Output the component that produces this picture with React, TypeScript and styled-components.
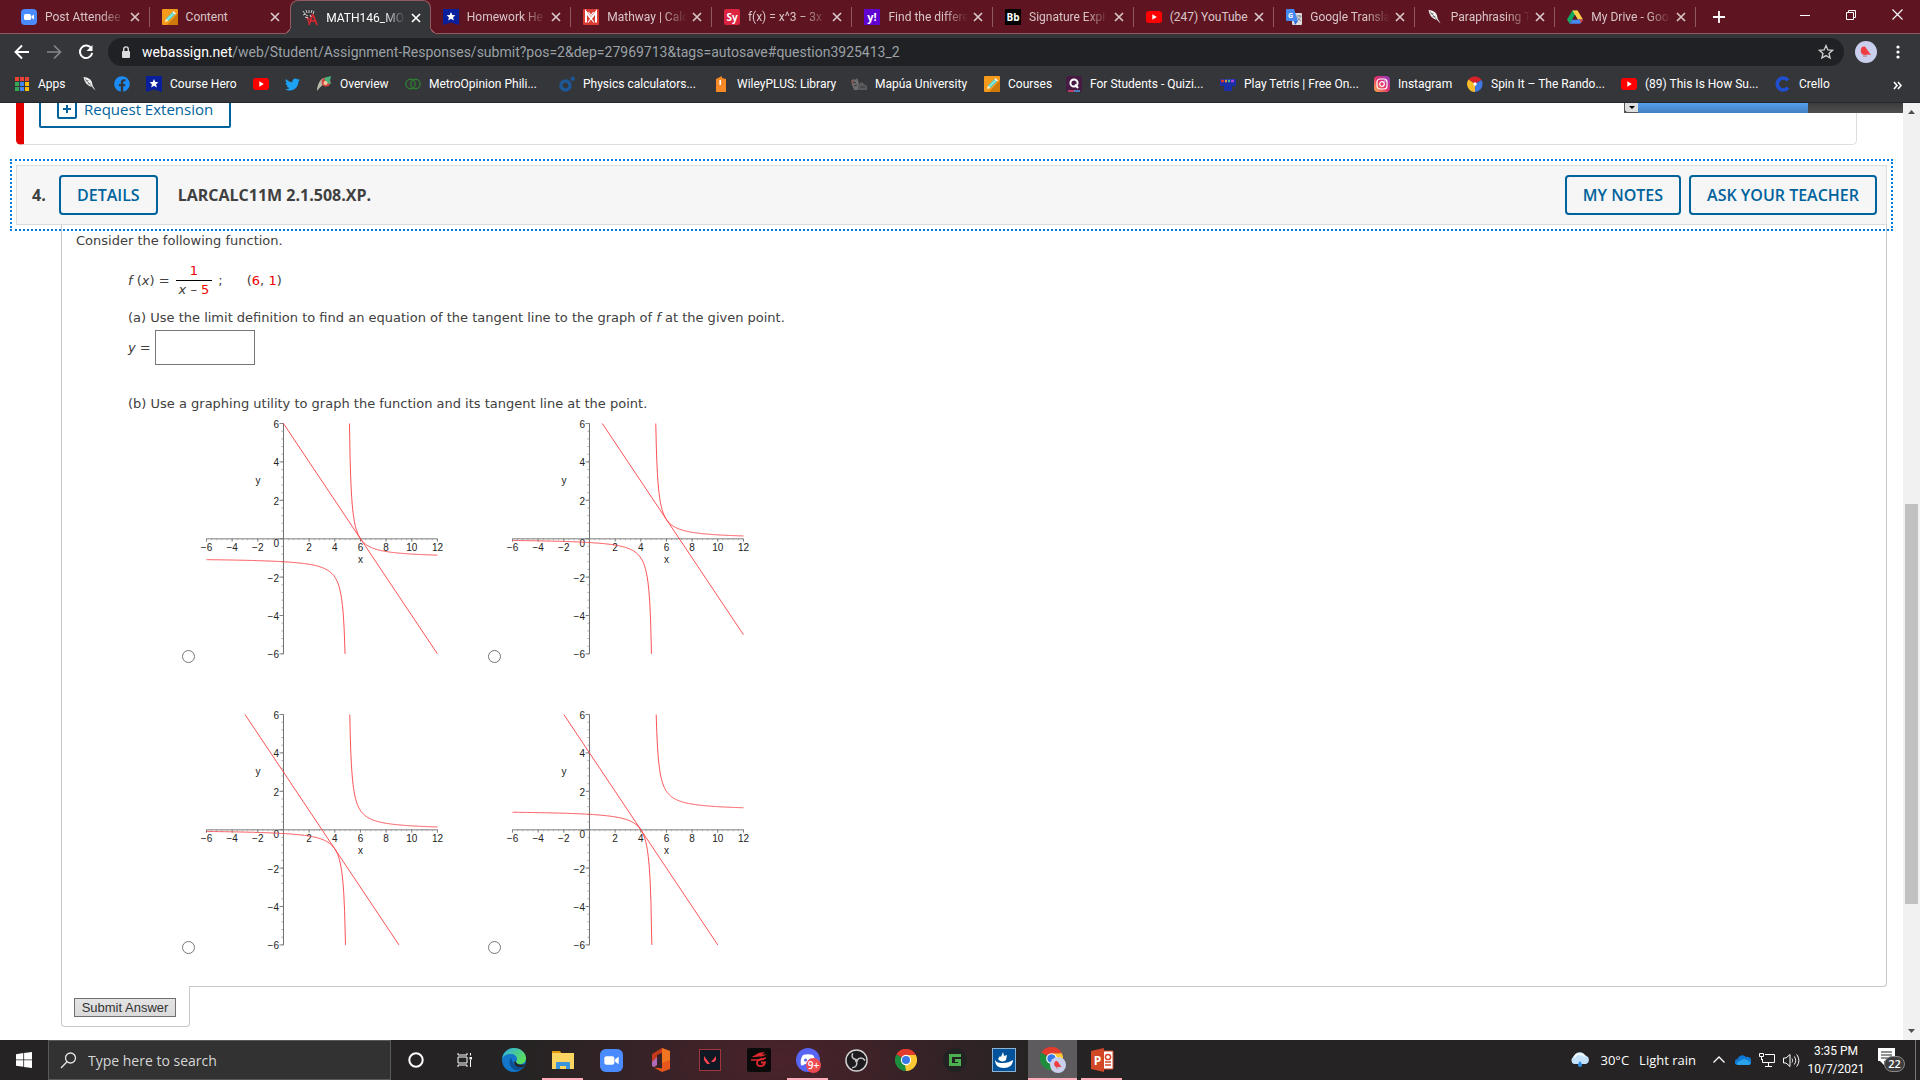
import React from "react";
import styled, { createGlobalStyle, css } from "styled-components";
import { FaFacebook, FaTwitter } from "react-icons/fa";

const ui = `"Open Sans", "Noto Sans", sans-serif`;
const chromeUi = `Roboto, "Open Sans", sans-serif`;
const verdana = `"DejaVu Sans", "Noto Sans", sans-serif`;
const arial = `"Liberation Sans", sans-serif`;

const brand = "#00639c";
const line = "#c8c8c8";

const Global = createGlobalStyle`
  *, *::before, *::after { box-sizing: border-box; }
  body { margin: 0; background: #fff; font-family: ${ui}; }
  button, input { font: inherit; margin: 0; }
`;

const Screen = styled.div`
  display: flex;
  flex-direction: column;
  height: 100vh;
  overflow: hidden;
`;

/* ---------- browser chrome ---------- */

const TabStrip = styled.header`
  display: flex;
  height: 34px;
  padding-left: 9px;
  background: #5e1521;
  box-shadow: inset 0 -1px #945a62;
  font-family: ${chromeUi};
`;

const TabList = styled.div`
  display: flex;
  flex: 1;
  min-width: 0;
`;

const Tab = styled.div<{ $active?: boolean; $divider?: boolean }>`
  position: relative;
  display: flex;
  flex: 1 1 0;
  align-items: center;
  min-width: 0;
  padding: 0 7px 0 12px;
  color: #d9c6c9;
  font-size: 12px;

  ${(p) =>
    p.$divider &&
    css`
      &::after {
        content: "";
        position: absolute;
        right: 0;
        top: 7px;
        height: 20px;
        border-right: 1px solid #8f5a62;
      }
    `}

  ${(p) =>
    p.$active &&
    css`
      color: #fff;
      background: #35363a;
      border: 1px solid #945a62;
      border-bottom: 0;
      border-radius: 8px 8px 0 0;
      padding: 0 6px 0 11px;

      &::before,
      &::after {
        content: "";
        position: absolute;
        bottom: 0;
        width: 8px;
        height: 8px;
      }
      &::before {
        left: -8px;
        background: radial-gradient(circle at 0 0, transparent 7px, #945a62 7px, #945a62 8px, #35363a 8px);
      }
      &::after {
        right: -8px;
        background: radial-gradient(circle at 100% 0, transparent 7px, #945a62 7px, #945a62 8px, #35363a 8px);
      }
    `}
`;

const TabLabel = styled.span<{ $fade?: boolean }>`
  flex: 1;
  min-width: 0;
  margin-left: 8px;
  white-space: nowrap;
  mask-image: ${(p) =>
    p.$fade ? "linear-gradient(to right, #000 calc(100% - 26px), transparent calc(100% - 2px))" : "none"};
`;

const IconButton = styled.button<{ $w?: number }>`
  display: flex;
  flex: none;
  align-items: center;
  justify-content: center;
  width: ${(p) => p.$w ?? 16}px;
  height: ${(p) => (p.$w ? "100%" : "16px")};
  padding: 0;
  border: 0;
  color: inherit;
  background: none;
`;

const StripActions = styled.div`
  display: flex;
  width: 224px;
  color: #fff;
`;

const WindowControls = styled.div`
  display: flex;
  height: 29px;
  margin-left: auto;
`;

const Toolbar = styled.nav`
  display: flex;
  align-items: center;
  height: 36px;
  padding: 0 6px;
  color: #fff;
  background: #35363a;
  font-family: ${chromeUi};
`;

const Omnibox = styled.div`
  display: flex;
  flex: 1;
  align-items: center;
  height: 28px;
  margin: 0 6px;
  padding: 0 10px 0 12px;
  border-radius: 14px;
  color: #9aa0a6;
  background: #202124;
  font-size: 14px;
`;

const Url = styled.span`
  flex: 1;
  margin-left: 10px;
  white-space: nowrap;

  b {
    color: #fff;
    font-weight: 400;
  }
`;

const Bookmarks = styled.nav`
  display: flex;
  align-items: center;
  height: 33px;
  padding: 0 18px 4px 14px;
  gap: 16px;
  background: #35363a;
  border-bottom: 1px solid #26272a;
  font-family: ${chromeUi};
`;

const Bookmark = styled.a<{ $w?: number }>`
  display: flex;
  flex: none;
  align-items: center;
  gap: 8px;
  width: ${(p) => (p.$w ? `${p.$w}px` : "auto")};
  color: #fff;
  font-size: 12px;
  line-height: 16px;
  text-decoration: none;
  white-space: nowrap;

  svg {
    flex: none;
  }
`;

const Overflow = styled.span`
  margin-left: auto;
`;

/* ---------- page ---------- */

const Viewport = styled.div`
  position: relative;
  display: flex;
  flex: 1;
  min-height: 0;
  overflow: hidden;
`;

const Page = styled.main`
  flex: 1;
  min-width: 0;
`;

const Scrollbar = styled.div`
  display: flex;
  flex-direction: column;
  align-items: center;
  width: 17px;
  background: #f1f1f1;
`;

const ScrollTrack = styled.div`
  display: grid;
  grid-template-rows: 384fr 400fr 119fr;
  flex: 1;
  width: 13px;

  &::before {
    content: "";
    grid-row: 2;
    background: #c1c1c1;
  }
`;

const Timer = styled.div`
  position: absolute;
  top: 0;
  right: 17px;
  display: flex;
  width: 279px;
  height: 10px;
  background: linear-gradient(#3c3c3c, #505050);
`;

const TimerToggle = styled.button`
  display: flex;
  align-items: center;
  justify-content: center;
  width: 14px;
  padding: 0;
  border: solid #555;
  border-width: 0 0 1px 1px;
  border-radius: 0 0 0 4px;
  background: #dedede;
`;

const TimerFill = styled.div`
  width: 170px;
  background: linear-gradient(#559fee, #4280bf);
`;

const PreviousCard = styled.section`
  margin: 0 46px 0 16px;
  padding: 0 0 16px 15px;
  border: 1px solid #dedede;
  border-top: 0;
  border-left: 8px solid #e50000;
  border-radius: 0 0 5px 5px;
`;

const OutlineButton = styled.button`
  display: inline-flex;
  align-items: center;
  justify-content: center;
  height: 40px;
  padding: 0 16px;
  border: 2px solid ${brand};
  border-radius: 4px;
  color: ${brand};
  background: #fff;
  font-size: 16px;
  font-weight: 600;
  white-space: nowrap;
`;

const HeaderButton = styled(OutlineButton)`
  background: none;
`;

const ExtensionButton = styled(OutlineButton)`
  display: flex;
  gap: 7px;
  height: 38px;
  margin-top: -13px;
  border-radius: 2px;
  font-size: 15px;
  font-weight: 400;
  line-height: 16px;
`;

const QuestionHeader = styled.header`
  display: flex;
  align-items: center;
  gap: 8px;
  margin: 20px 16px 0;
  padding: 9px 9px 9px 15px;
  border: 1px solid #dcdcdc;
  outline: 2px dotted #007be0;
  outline-offset: 4px;
  background: #f6f6f6;
  color: #404040;
  font-size: 16px;
  font-weight: 700;
`;

const QuestionNumber = styled.span`
  width: 19px;
`;

const QuestionTitle = styled.h2`
  flex: 1;
  margin: 0 0 0 12px;
  font-size: 16px;
  font-weight: 700;
`;

const QuestionBody = styled.section`
  margin: 0 16px 0 61px;
  padding: 8px 14px 32px;
  border: 1px solid ${line};
  border-top: 0;
  border-radius: 0 0 4px 0;
  color: #404040;
  font-family: ${verdana};
  font-size: 13px;
  line-height: 16px;
`;

const Text = styled.p`
  margin: 0;
`;

const Parts = styled.div`
  padding-left: 52px;
`;

const Formula = styled.div`
  display: flex;
  align-items: center;
  gap: 6px;
  margin: 14px 0 12px;
  white-space: pre;
`;

const Fraction = styled.span`
  display: flex;
  flex-direction: column;
  align-items: center;

  > span:first-child {
    align-self: stretch;
    padding-bottom: 1px;
    border-bottom: 1px solid #000;
    text-align: center;
  }
  > span:last-child {
    padding: 1px 3px 0;
  }
`;

const Red = styled.span`
  color: #f00000;
`;

const Point = styled.span`
  margin-left: 18px;
`;

const Answer = styled.label`
  display: flex;
  align-items: center;
  gap: 4px;
  margin: 4px 0 31px;
`;

const AnswerInput = styled.input`
  width: 100px;
  height: 35px;
  border: 1px solid #767676;
  background: #fff;
`;

const Choices = styled.div`
  display: grid;
  grid-template-columns: repeat(2, 266px);
  gap: 41px 40px;
  padding: 1px 0 0 54px;
`;

const Choice = styled.label`
  display: flex;
  align-items: flex-end;
  gap: 2px;
`;

const Radio = styled.input`
  appearance: none;
  width: 13px;
  height: 13px;
  border: 1px solid #767676;
  border-radius: 50%;
  background: #fff;
`;

const SubmitTab = styled.div`
  width: 129px;
  margin: -1px 0 0 61px;
  padding: 12px;
  height: 41px;
  border: 1px solid ${line};
  border-top: 0;
  border-radius: 0 0 4px 4px;
  background: #fff;
`;

const SubmitButton = styled.button`
  display: block;
  height: 19px;
  width: 102px;
  padding: 0;
  border: 1px solid #707070;
  color: #333;
  background: linear-gradient(#e4e4e4, #dadada);
  font-family: ${arial};
  font-size: 13px;
  line-height: 16px;
`;

/* ---------- taskbar ---------- */

const Taskbar = styled.footer`
  display: flex;
  height: 40px;
  color: #fff;
  background:
    radial-gradient(ellipse 260px 120px at 780px 20px, #4b222b 0, rgba(75, 34, 43, 0) 100%),
    #252323;
`;

const SearchBox = styled.label`
  display: flex;
  align-items: center;
  gap: 11px;
  width: 343px;
  padding-left: 11px;
  border: 1px solid #5a5a5a;
  background: #323232;
`;

const SearchInput = styled.input`
  flex: 1;
  min-width: 0;
  padding: 0;
  border: 0;
  outline: 0;
  color: #e0e0e0;
  background: none;
  font-size: 14px;

  &::placeholder {
    color: #d6d6d6;
    opacity: 1;
  }
`;

const AppButton = styled.button<{ $open?: boolean; $active?: boolean }>`
  position: relative;
  display: flex;
  align-items: center;
  justify-content: center;
  width: 49px;
  padding: 0;
  border: 0;
  color: #fff;
  background: ${(p) => (p.$active ? "#5d5b5e" : "none")};

  &::after {
    content: "";
    position: absolute;
    bottom: 0;
    left: ${(p) => (p.$active ? 0 : 4)}px;
    right: ${(p) => (p.$active ? 0 : 4)}px;
    height: 2px;
    background: ${(p) => (p.$open ? "#ffacbb" : "transparent")};
  }
`;

const Tray = styled.div`
  display: flex;
  align-items: center;
  margin-left: auto;
  padding-right: 4px;
`;

const Weather = styled.div`
  display: flex;
  align-items: center;
  gap: 10px;
  margin-right: 11px;
  font-size: 13px;
`;

const TrayIcon = styled.div`
  display: flex;
  justify-content: center;
  width: 24px;
`;

const Clock = styled.time`
  width: 66px;
  font-family: ${chromeUi};
  font-size: 12px;
  line-height: 18px;
  text-align: center;
`;

const Notices = styled.div`
  display: flex;
  align-items: center;
  justify-content: center;
  width: 47px;
  height: 40px;
  border-right: 1px solid #777;
`;

/* ---------- small drawings ---------- */

const Svg = ({ s = 16, children, vb = "0 0 16 16" }: { s?: number; vb?: string; children: React.ReactNode }) => (
  <svg width={s} height={s} viewBox={vb} fill="none" aria-hidden="true">
    {children}
  </svg>
);

const CloseIcon = () => (
  <Svg s={10} vb="0 0 10 10">
    <path d="M1 1l8 8M9 1L1 9" stroke="currentColor" strokeWidth="1.7" />
  </Svg>
);

const ZoomIcon = ({ s = 16 }: { s?: number }) => (
  <Svg s={s}>
    <rect width="16" height="16" rx="4" fill="#4a8cff" />
    <rect x="3" y="5" width="7" height="6" rx="1.5" fill="#fff" />
    <path d="M10.5 7.2L13 5.4v5.2l-2.5-1.8z" fill="#fff" />
  </Svg>
);

const PencilIcon = () => (
  <Svg>
    <rect width="16" height="16" rx="1" fill="#f59a1b" />
    <path d="M16 4v12H5z" fill="#cf7a08" />
    <path d="M3 13l1-3.5 2.5 2.5z" fill="#fff3d0" />
    <path d="M4 9.5l6.5-6.5 2.5 2.5-6.5 6.5z" fill="#59d3c8" />
    <path d="M10.5 3l1-1 2.5 2.5-1 1z" fill="#f7f7f7" />
    <path d="M5.2 10.7l6.5-6.5" stroke="#d9fff9" strokeWidth=".8" />
  </Svg>
);

const WebAssignIcon = () => (
  <Svg>
    <path d="M1 1l2 3M4 0l1 3M7 0v3M10 0L9 3M12 1l-1 3M1 5l3-1M4 5l2 1" stroke="#c9c9c9" strokeWidth="1" />
    <path d="M10.5 4.5L7 15M11 4.5L15 15M8.5 11h5" stroke="#e3262f" strokeWidth="1.6" />
    <path d="M5 7l3 3M5 8l2 5M9 7l1 3" stroke="#c62a31" strokeWidth="1.2" />
    <path d="M3 7l3 1M8 5l1 2" stroke="#fff" strokeWidth=".8" />
  </Svg>
);

const CourseHeroIcon = () => (
  <Svg>
    <path d="M0 0h16v16l-8-2.5L0 16z" fill="#0a1f9c" />
    <path d="M8 3l1.3 2.9 3.1.3-2.3 2.1.7 3.1L8 9.8l-2.8 1.6.7-3.1-2.3-2.1 3.1-.3z" fill="#fff" />
  </Svg>
);

const MathwayIcon = () => (
  <Svg>
    <rect width="16" height="16" rx="1" fill="#d93a32" />
    <path d="M3 13.5V3l5 6.5L13 3v10.5" stroke="#fff" strokeWidth="2" />
    <path d="M5 13.5l3-4 3 4M5.5 3L8 6.5 10.5 3" stroke="#fff" strokeWidth="1.2" />
  </Svg>
);

const LetterIcon = ({ bg, t, r = 2, size = 9 }: { bg: string; t: string; r?: number; size?: number }) => (
  <Svg>
    <rect width="16" height="16" rx={r} fill={bg} />
    <text x="8" y="11.5" textAnchor="middle" fill="#fff" fontFamily={ui} fontWeight="700" fontSize={size}>
      {t}
    </text>
  </Svg>
);

const YouTubeIcon = () => (
  <Svg>
    <rect y="2" width="16" height="12" rx="3" fill="#f00" />
    <path d="M6.3 5.3v5.4L10.8 8z" fill="#fff" />
  </Svg>
);

const TranslateIcon = () => (
  <Svg>
    <rect x="6" y="4" width="10" height="12" rx="1" fill="#dcdcdc" />
    <path d="M1 0h7l4 12H1a1 1 0 01-1-1V1a1 1 0 011-1z" fill="#4688f1" />
    <path d="M8 12h4l-3 4z" fill="#3367d6" />
    <text x="4.5" y="8.5" textAnchor="middle" fill="#fff" fontFamily={ui} fontWeight="700" fontSize="7">
      G
    </text>
    <path
      d="M10.5 7h5M13 6v1M14.5 7c-.5 2-1.5 3.5-3 4.5M11.5 8.5c1 1.5 2 2.5 3.5 3.5"
      stroke="#6b7a86"
      strokeWidth=".8"
    />
  </Svg>
);

const QuillIcon = () => (
  <Svg>
    <path d="M1.5 1c4.500.5 7.500 2 8.500 5.500.3 1.500.5 3 1.500 4.500l2 3.500-3.500-3.500C6 10 2.500 7 1.500 1z" fill="#f4f4f4" />
    <path d="M3 2.5l7.5 9M3.5 5l3-.5M5.500 8l3-.8" stroke="#555" strokeWidth=".7" />
  </Svg>
);

const DriveIcon = () => (
  <Svg>
    <path d="M5.4 1.5h5.2L5.3 10.5 2.7 14.8 0 10.5z" fill="#11a861" />
    <path d="M5.4 1.5h5.2L16 10.5h-5.3z" fill="#ffcf48" />
    <path d="M5.3 10.5H16l-2.7 4.3H2.7z" fill="#4688f4" />
    <path d="M12.5 10.5H16l-2.1 3.5z" fill="#ea4335" />
    <path d="M8 5.9l2.7 4.6H5.3z" fill="#5e1521" />
  </Svg>
);

const appsColors = [
  ["#ea4335", "#ea4335", "#ea4335"],
  ["#34a853", "#4285f4", "#fbbc05"],
  ["#34a853", "#4285f4", "#fbbc05"],
];

const AppsIcon = () => (
  <Svg>
    {appsColors.map((row, r) =>
      row.map((c, i) => <rect key={`${r}${i}`} x={1 + i * 5} y={1 + r * 5} width="4" height="4" fill={c} />),
    )}
  </Svg>
);

const OverviewIcon = () => (
  <Svg>
    <path d="M1 15c0-5 2-10 6-13l3 5c-3 1-6 4-9 8z" fill="#b9b9a8" />
    <circle cx="10" cy="6" r="4.5" fill="#d9443c" />
    <path d="M8 2l7-2-1 5 1 3-5-1z" fill="#49b27c" />
    <circle cx="9.5" cy="7" r="2" fill="#f0c9a0" />
  </Svg>
);

const RingsIcon = () => (
  <Svg>
    <circle cx="5.5" cy="8" r="4.7" stroke="#2f7d32" strokeWidth="1.4" />
    <circle cx="10.5" cy="8" r="4.7" stroke="#2f7d32" strokeWidth="1.4" />
  </Svg>
);

const PhysicsIcon = () => (
  <Svg>
    <circle cx="6.5" cy="9.5" r="4.5" stroke="#1d5796" strokeWidth="3.4" />
    <circle cx="13.7" cy="2.7" r="2.2" fill="#1d5796" />
  </Svg>
);

const WileyIcon = () => (
  <Svg>
    <path d="M3 3l6-3v2l4 1v13H3z" fill="#f58a26" />
    <path d="M7.2 4v5" stroke="#fff" strokeWidth="1.6" />
  </Svg>
);

const MapuaIcon = () => (
  <Svg>
    <path d="M0 5l2-2 2 1 2-2 2 5-1 7H3L1 9z" fill="#6d6d70" />
    <path d="M8 8l3-2 2 2 3 2v4H7z" fill="#5b5b5e" />
    <path d="M2 6l3 1M3 10l3-1M9 11h5" stroke="#35363a" />
    <path d="M1 4l1 4" stroke="#9a4a3a" />
  </Svg>
);

const QuizIcon = () => (
  <Svg>
    <rect width="16" height="16" rx="3" fill="#461a42" />
    <circle cx="8" cy="7" r="3.6" stroke="#fff" strokeWidth="2" />
    <path d="M9 8.5l3 3.5" stroke="#fff" strokeWidth="2" />
    <path d="M2 15h6" stroke="#e94d6b" strokeWidth="1.5" />
    <path d="M8 15h6" stroke="#4aa3e8" strokeWidth="1.5" />
  </Svg>
);

const TetrisIcon = () => (
  <Svg>
    <path d="M0 3h16v7h-4v5H4v-5H0z" fill="#1b2fa8" />
    <path d="M1 5h3" stroke="#d33" strokeWidth="2.5" />
    <path d="M5 5h2" stroke="#e93" strokeWidth="2.5" />
    <path d="M8 5h2" stroke="#4b8" strokeWidth="2.5" />
    <path d="M11 5h3" stroke="#a4d" strokeWidth="2.5" />
  </Svg>
);

const InstagramIcon = () => (
  <Svg>
    <defs>
      <linearGradient id="ig" x1="0" y1="1" x2="1" y2="0">
        <stop offset="0" stopColor="#fdb44b" />
        <stop offset=".5" stopColor="#e6306c" />
        <stop offset="1" stopColor="#8a3ac8" />
      </linearGradient>
    </defs>
    <rect width="16" height="16" rx="4" fill="url(#ig)" />
    <rect x="3" y="3" width="10" height="10" rx="3" stroke="#fff" strokeWidth="1.2" />
    <circle cx="8" cy="8" r="2.3" stroke="#fff" strokeWidth="1.2" />
    <circle cx="11" cy="5" r=".7" fill="#fff" />
  </Svg>
);

const WheelIcon = () => (
  <Svg>
    <path d="M8 8L1.5 3.5A8 8 0 0114.5 4z" fill="#d8222a" />
    <path d="M8 8l6.500-4A8 8 0 018 16z" fill="#3f78e0" />
    <path d="M8 8v8A8 8 0 011.5 3.5z" fill="#f7bd2c" />
    <circle cx="8" cy="8" r="1.7" fill="#fff" />
  </Svg>
);

const CrelloIcon = () => (
  <Svg>
    <path d="M13 4.3A6 6 0 1013 11.7" stroke="#1f4fd1" strokeWidth="3.6" />
  </Svg>
);

const ChromeIcon = ({ s = 22 }: { s?: number }) => (
  <Svg s={s} vb="0 0 24 24">
    <path d="M12 12L1.6 6A12 12 0 0122.4 6z" fill="#e33b2e" />
    <path d="M12 12L22.4 6A12 12 0 0112 24z" fill="#fcc934" />
    <path d="M12 12v12A12 12 0 011.6 6z" fill="#1e8e3e" />
    <path d="M12 6.5h10.7L17 14.5 12 24l-1-6z" fill="#fcc934" />
    <path d="M1.6 6A12 12 0 0122.6 6.5H12z" fill="#e33b2e" />
    <circle cx="12" cy="12" r="5.6" fill="#fff" />
    <circle cx="12" cy="12" r="4.4" fill="#3b78e7" />
  </Svg>
);

const BirdIcon = ({ s = 22 }: { s?: number }) => (
  <Svg s={s} vb="0 0 22 22">
    <circle cx="11" cy="11" r="11" fill="#c9cfec" />
    <path d="M6 8c1-3 4-3 5-1l5 7-3-.5-4 .5c-3-1-3.5-3-3-6z" fill="#ee3d40" />
    <path d="M9 14v2M11 14v2" stroke="#b55" strokeWidth=".8" />
  </Svg>
);

/* ---------- data ---------- */

const tabs: { icon: React.ReactNode; label: string; active?: boolean; whole?: boolean }[] = [
  { icon: <ZoomIcon />, label: "Post Attendee" },
  { icon: <PencilIcon />, label: "Content", whole: true },
  { icon: <WebAssignIcon />, label: "MATH146_MO", active: true },
  { icon: <CourseHeroIcon />, label: "Homework He" },
  { icon: <MathwayIcon />, label: "Mathway | Calc" },
  { icon: <LetterIcon bg="#dc2340" t="Sy" size={10} />, label: "f(x) = x^3 − 3x" },
  { icon: <LetterIcon bg="#5f01d1" t="y!" r={0} size={11} />, label: "Find the differe" },
  { icon: <LetterIcon bg="#000" t="Bb" r={0} size={10} />, label: "Signature Expi" },
  { icon: <YouTubeIcon />, label: "(247) YouTube", whole: true },
  { icon: <TranslateIcon />, label: "Google Transla" },
  { icon: <QuillIcon />, label: "Paraphrasing T" },
  { icon: <DriveIcon />, label: "My Drive - Goo" },
];

const bookmarks: { icon: React.ReactNode; label?: string; w?: number }[] = [
  { icon: <AppsIcon />, label: "Apps", w: 52 },
  { icon: <QuillIcon /> },
  { icon: <FaFacebook size={16} color="#1b8cf5" /> },
  { icon: <CourseHeroIcon />, label: "Course Hero", w: 91 },
  { icon: <YouTubeIcon /> },
  { icon: <FaTwitter size={15} color="#1da1f2" /> },
  { icon: <OverviewIcon />, label: "Overview", w: 73 },
  { icon: <RingsIcon />, label: "MetroOpinion Phili...", w: 138 },
  { icon: <PhysicsIcon />, label: "Physics calculators...", w: 138 },
  { icon: <WileyIcon />, label: "WileyPLUS: Library", w: 122 },
  { icon: <MapuaIcon />, label: "Mapúa University", w: 117 },
  { icon: <PencilIcon />, label: "Courses", w: 66 },
  { icon: <QuizIcon />, label: "For Students - Quizi...", w: 138 },
  { icon: <TetrisIcon />, label: "Play Tetris | Free On...", w: 138 },
  { icon: <InstagramIcon />, label: "Instagram", w: 77 },
  { icon: <WheelIcon />, label: "Spin It – The Rando...", w: 138 },
  { icon: <YouTubeIcon />, label: "(89) This Is How Su...", w: 138 },
  { icon: <CrelloIcon />, label: "Crello" },
];

/* ---------- graphs ---------- */

const px = (x: number) => 9.5 + (x + 6) * 12.83;
const py = (y: number) => 10.5 + (6 - y) * 19.2;

const branch = (shift: number, from: number, to: number) => {
  const pts: string[] = [];
  const n = 160;
  for (let i = 0; i <= n; i++) {
    const x = from + ((to - from) * i) / n;
    pts.push(`${px(x).toFixed(2)},${py(shift + 1 / (x - 5)).toFixed(2)}`);
  }
  return pts.join(" ");
};

const range = (from: number, to: number, step: number) =>
  Array.from({ length: Math.round((to - from) / step) + 1 }, (_, i) => from + i * step);

const num = (v: number) => (v < 0 ? `−${-v}` : `${v}`);

/* Hyperbola shift + 1/(x - 5) with the line y = sum - x. */
const Graph = ({ shift, sum }: { shift: number; sum: number }) => {
  const x1 = Math.max(-6, sum - 6);
  const x2 = Math.min(12, sum + 6);
  return (
    <svg width="250" height="250" viewBox="0 0 250 250" fill="none" role="img" aria-label="Graph choice">
      <path d={`M${px(-6)} ${py(0)}H${px(12)}`} stroke="#a8a8a8" strokeWidth="1.5" />
      <path d={`M${px(0)} ${py(6)}V${py(-6)}`} stroke="#6e6e6e" />
      {range(-6, 12, 0.4).map((x) => (
        <path key={x} d={`M${px(x)} ${py(0)}v1.5`} stroke="#8a8a8a" strokeWidth=".6" />
      ))}
      {range(-6, 6, 0.4).map((y) => (
        <path key={y} d={`M${px(0)} ${py(y)}h-2`} stroke="#8a8a8a" strokeWidth=".7" />
      ))}
      {range(-6, 6, 2).map((y) => (
        <path key={y} d={`M${px(0)} ${py(y)}h-4`} stroke="#777" strokeWidth=".9" />
      ))}
      {range(-6, 12, 2).map((x) => (
        <path key={x} d={`M${px(x)} ${py(0)}v3`} stroke="#777" strokeWidth=".9" />
      ))}
      <g fill="#222" fontFamily={arial} fontSize="10">
        {range(-6, 12, 2)
          .filter((x) => x !== 0)
          .map((x) => (
            <text key={x} x={px(x)} y="138" textAnchor="middle">
              {num(x)}
            </text>
          ))}
        {range(-6, 6, 2)
          .filter((y) => y !== 0)
          .map((y) => (
            <text key={y} x="82" y={py(y) + 4.5} textAnchor="end">
              {num(y)}
            </text>
          ))}
        <text x="82" y="134" textAnchor="end">
          0
        </text>
        <text x="61" y="71" textAnchor="middle">
          y
        </text>
        <text x={px(6)} y="150" textAnchor="middle">
          x
        </text>
      </g>
      <g stroke="#fb3f45" strokeWidth=".9">
        <path d={`M${px(x1)} ${py(sum - x1)}L${px(x2)} ${py(sum - x2)}`} />
        <polyline points={branch(shift, -6, 5 - 1 / (6 + shift))} />
        <polyline points={branch(shift, 5 + 1 / (6 - shift), 12)} />
      </g>
    </svg>
  );
};

const choices = [
  { shift: -1, sum: 6 },
  { shift: 0, sum: 7 },
  { shift: 0, sum: 3 },
  { shift: 1, sum: 4 },
];

/* ---------- taskbar icons ---------- */

const apps: { name: string; icon: React.ReactNode; open?: boolean; active?: boolean }[] = [
  {
    name: "Cortana",
    icon: (
      <Svg s={16}>
        <circle cx="8" cy="8" r="6.7" stroke="#fff" strokeWidth="2" />
      </Svg>
    ),
  },
  {
    name: "Task View",
    icon: (
      <Svg s={16}>
        <path d="M1 1v2h9V1M1 15v-2h9v2M1 5h9v6H1zM13.5 1v2.5M13.5 8v7" stroke="#fff" />
        <rect x="12.5" y="5" width="2.5" height="2.5" fill="#fff" />
      </Svg>
    ),
  },
  {
    name: "Edge",
    icon: (
      <Svg s={24} vb="0 0 24 24">
        <defs>
          <linearGradient id="edgeTop" x1="0" y1="0" x2="1" y2=".6">
            <stop offset="0" stopColor="#2fa9e8" />
            <stop offset="1" stopColor="#5be05a" />
          </linearGradient>
        </defs>
        <circle cx="12" cy="12" r="12" fill="#1275c9" />
        <path
          d="M0 11C1 4 6 0 12 0c7 0 12 5 12 10 0 4-3 6-6 6-3 0-4-1-4-2s1-1 1-3c0-3-3-5-6-5-4 0-8 2-9 5z"
          fill="url(#edgeTop)"
        />
        <path d="M9 10c-3 4-1 10 4 12 4 1 8-1 10-5-4 2-8 2-11-1-2-2-2-5-3-6z" fill="#0c4f93" />
        <path d="M14 13.5c0 3 4 4 9 2.5l-1.5 2.5c-5 2-9-.5-9.5-4.5z" fill="#252323" />
      </Svg>
    ),
  },
  {
    name: "File Explorer",
    open: true,
    icon: (
      <Svg s={22} vb="0 0 22 22">
        <path d="M0 2h8l2 3H0z" fill="#e09b10" />
        <path d="M0 4h22v16H0z" fill="#fcd462" />
        <path d="M4 20v-6a1 1 0 011-1h12a1 1 0 011 1v6h-4v-3H8v3z" fill="#3a96dc" />
      </Svg>
    ),
  },
  { name: "Zoom", icon: <ZoomIcon s={23} /> },
  {
    name: "Office",
    icon: (
      <Svg s={24} vb="0 0 24 24">
        <path d="M3 6L13 0v5L8 7v10l-3 2-2-1z" fill="#c43a1a" />
        <path d="M13 0l8 3v18l-8 3-8-4.5 8 1z" fill="#e8561b" />
        <path d="M13 0l8 3v9l-8 3z" fill="#f58b24" opacity=".6" />
        <path d="M3 14l5-5v8l-3 2-2-1z" fill="#b06bb8" />
      </Svg>
    ),
  },
  {
    name: "Valorant",
    icon: (
      <Svg s={22} vb="0 0 22 22">
        <rect x=".5" y=".5" width="21" height="21" fill="#0f1823" stroke="#a1363f" />
        <path d="M5 7l6 8H8l-3-4zM17 7v4l-2 2h-3z" fill="#fa4454" />
      </Svg>
    ),
  },
  {
    name: "Garena",
    icon: (
      <Svg s={24} vb="0 0 24 24">
        <rect width="24" height="24" rx="2" fill="#0a0a0a" />
        <path d="M4 9c3 0 5-4 10-4.5l4-.5-3 2.5h5l-5 2c-4 0-7 1-11 .5z" fill="#dd2a2e" />
        <path d="M4 12h6c4 0 7-2 9-2" stroke="#dd2a2e" strokeWidth="1.6" />
        <path d="M17 11c-4 0-7 1.5-7 4 0 4 7 4.500 8-.5h-4" stroke="#dd2a2e" strokeWidth="1.8" />
      </Svg>
    ),
  },
  {
    name: "Discord",
    open: true,
    icon: (
      <Svg s={26} vb="0 0 26 26">
        <circle cx="13" cy="13" r="12" fill="#5865f2" />
        <path d="M8 8c3-1 7-1 10 0 2 3 3 6 2 10-2 1-3 0-4-1h-6c-1 1-3 2-4 1-1-4 0-7 2-10z" fill="#fff" />
        <circle cx="10.5" cy="13" r="1.5" fill="#5865f2" />
        <circle cx="15.5" cy="13" r="1.5" fill="#5865f2" />
        <circle cx="18.5" cy="18.5" r="7.5" fill="#ec4a50" />
        <text x="18.5" y="22" textAnchor="middle" fill="#fff" fontFamily={ui} fontSize="10" fontWeight="600">
          9+
        </text>
      </Svg>
    ),
  },
  {
    name: "OBS",
    icon: (
      <Svg s={23} vb="0 0 24 24">
        <circle cx="12" cy="12" r="11" fill="#1d1b1f" stroke="#d4d4d4" strokeWidth="1.5" />
        <path
          d="M12 11C8 11 6.5 8 8 4.5M12.5 12c2-3.5 6-3.5 8.5 0M11.5 12.5c2 3 .5 6.5-4 7"
          stroke="#c4c4c4"
          strokeWidth="1.6"
        />
        <circle cx="12" cy="12" r="1.6" fill="#c4c4c4" />
      </Svg>
    ),
  },
  { name: "Chrome", icon: <ChromeIcon /> },
  {
    name: "GameLoop",
    icon: (
      <Svg s={24} vb="0 0 24 24">
        <circle cx="12" cy="12" r="12" fill="#222" />
        <path d="M16.5 9V7.5h-9v9h9v-4h-4.500" stroke="#4caf50" strokeWidth="3" />
      </Svg>
    ),
  },
  {
    name: "Ship",
    icon: (
      <Svg s={24} vb="0 0 24 24">
        <rect x=".5" y=".5" width="23" height="23" fill="#00539b" stroke="#8eb2d2" />
        <path d="M3 12c1 2.500 4 3 8 3s7-1 10-3c0 5-4 8-9 8-6 0-9-3-9-8z" fill="#fff" />
        <path d="M6 11l2-3 1 1 2-5 1 4 3-1-1 5c-2 2-6 2-8-1z" fill="#fff" />
      </Svg>
    ),
  },
  {
    name: "Chrome, profile window",
    open: true,
    active: true,
    icon: (
      <Svg s={26} vb="0 0 26 26">
        <ChromeIcon s={23} />
        <g transform="translate(10 10)">
          <BirdIcon s={16} />
        </g>
      </Svg>
    ),
  },
  {
    name: "PowerPoint",
    open: true,
    icon: (
      <Svg s={24} vb="0 0 24 24">
        <path d="M13 3h10v18H13z" fill="#fff" stroke="#d24726" />
        <path d="M15 14h6M15 17h6" stroke="#d24726" strokeWidth="1.4" />
        <circle cx="18" cy="9" r="2.6" stroke="#d24726" strokeWidth="1.5" />
        <path d="M1 3l13-3v24L1 21z" fill="#d24726" />
        <text x="7.5" y="16.5" textAnchor="middle" fill="#fff" fontFamily={ui} fontSize="12" fontWeight="700">
          P
        </text>
      </Svg>
    ),
  },
];

export default function App() {
  return (
    <Screen>
      <Global />

      <TabStrip>
        <TabList>
          {tabs.map((t, i) => (
            <Tab key={t.label} $active={t.active} $divider={!t.active && !tabs[i + 1]?.active}>
              {t.icon}
              <TabLabel $fade={!t.whole}>{t.label}</TabLabel>
              <IconButton aria-label="Close tab">
                <CloseIcon />
              </IconButton>
            </Tab>
          ))}
        </TabList>
        <StripActions>
          <IconButton $w={46} aria-label="New tab">
            <Svg s={12} vb="0 0 12 12">
              <path d="M6 0v12M0 6h12" stroke="currentColor" strokeWidth="1.8" />
            </Svg>
          </IconButton>
          <WindowControls>
            <IconButton $w={46} aria-label="Minimize">
              <Svg s={10} vb="0 0 10 10">
                <path d="M0 5.5h10" stroke="currentColor" />
              </Svg>
            </IconButton>
            <IconButton $w={46} aria-label="Restore">
              <Svg s={10} vb="0 0 10 10">
                <path d="M.5 2.5h7v7h-7zM2.5 2.5v-2h7v7h-2" stroke="currentColor" />
              </Svg>
            </IconButton>
            <IconButton $w={46} aria-label="Close window">
              <Svg s={11} vb="0 0 11 11">
                <path d="M.5.5l10 10M10.5.5l-10 10" stroke="currentColor" strokeWidth="1.1" />
              </Svg>
            </IconButton>
          </WindowControls>
        </StripActions>
      </TabStrip>

      <Toolbar>
        <IconButton $w={32} aria-label="Back">
          <Svg s={16}>
            <path d="M15 8H2M8 1.5L1.5 8 8 14.5" stroke="#fff" strokeWidth="1.9" />
          </Svg>
        </IconButton>
        <IconButton $w={32} aria-label="Forward">
          <Svg s={16}>
            <path d="M1 8h13M8 1.5L14.5 8 8 14.5" stroke="#85868a" strokeWidth="1.7" />
          </Svg>
        </IconButton>
        <IconButton $w={32} aria-label="Reload">
          <Svg s={16}>
            <path d="M13.4 4.5A6.2 6.2 0 1014.2 9" stroke="#fff" strokeWidth="2" />
            <path d="M14.5 1v6h-6z" fill="#fff" />
          </Svg>
        </IconButton>
        <Omnibox>
          <Svg s={12} vb="0 0 12 12">
            <rect x="2" y="5" width="8" height="7" rx="1" fill="#dcdcdc" />
            <path d="M3.7 5V3.2a2.3 2.3 0 014.6 0V5" stroke="#dcdcdc" strokeWidth="1.4" />
          </Svg>
          <Url>
            <b>webassign.net</b>/web/Student/Assignment-Responses/submit?pos=2&amp;dep=27969713&amp;tags=autosave#question3925413_2
          </Url>
          <Svg s={16}>
            <path
              d="M8 1.6l1.9 4.3 4.7.4-3.6 3.1 1.1 4.6L8 11.6 3.9 14l1.1-4.6L1.4 6.3l4.7-.4z"
              stroke="#d0d0d0"
              strokeWidth="1.3"
            />
          </Svg>
        </Omnibox>
        <IconButton $w={32} aria-label="Profile">
          <BirdIcon />
        </IconButton>
        <IconButton $w={32} aria-label="Menu">
          <Svg s={16}>
            <circle cx="8" cy="3" r="1.6" fill="#fff" />
            <circle cx="8" cy="8" r="1.6" fill="#fff" />
            <circle cx="8" cy="13" r="1.6" fill="#fff" />
          </Svg>
        </IconButton>
      </Toolbar>

      <Bookmarks>
        {bookmarks.map((b, i) => (
          <Bookmark key={i} href="#" $w={b.w}>
            {b.icon}
            {b.label}
          </Bookmark>
        ))}
        <Overflow>
          <Svg s={9} vb="0 0 9 9">
            <path d="M1 1l3 3.5L1 8M5 1l3 3.5L5 8" stroke="#fff" strokeWidth="1.6" />
          </Svg>
        </Overflow>
      </Bookmarks>

      <Viewport>
        <Page>
          <PreviousCard>
            <ExtensionButton>
              <Svg s={20} vb="0 0 20 20">
                <rect x="1" y="1" width="18" height="18" rx="1" stroke={brand} strokeWidth="2" />
                <path d="M10 6v8M6 10h8" stroke={brand} strokeWidth="2" />
              </Svg>
              Request Extension
            </ExtensionButton>
          </PreviousCard>

          <QuestionHeader>
            <QuestionNumber>4.</QuestionNumber>
            <HeaderButton>DETAILS</HeaderButton>
            <QuestionTitle>LARCALC11M 2.1.508.XP.</QuestionTitle>
            <HeaderButton>MY NOTES</HeaderButton>
            <HeaderButton>ASK YOUR TEACHER</HeaderButton>
          </QuestionHeader>

          <QuestionBody>
            <Text>Consider the following function.</Text>
            <Parts>
              <Formula>
                <span>
                  <i>f</i> (<i>x</i>) =
                </span>
                <Fraction>
                  <span>
                    <Red>1</Red>
                  </span>
                  <span>
                    <i>x</i> – <Red>5</Red>
                  </span>
                </Fraction>
                <span>;</span>
                <Point>
                  (<Red>6</Red>, <Red>1</Red>)
                </Point>
              </Formula>
              <Text>
                (a) Use the limit definition to find an equation of the tangent line to the graph of <i>f</i> at the
                given point.
              </Text>
              <Answer>
                <span>
                  <i>y</i> =
                </span>
                <AnswerInput type="text" />
              </Answer>
              <Text>(b) Use a graphing utility to graph the function and its tangent line at the point.</Text>
              <Choices>
                {choices.map((c, i) => (
                  <Choice key={i}>
                    <Radio type="radio" name="graph" />
                    <Graph shift={c.shift} sum={c.sum} />
                  </Choice>
                ))}
              </Choices>
            </Parts>
          </QuestionBody>
          <SubmitTab>
            <SubmitButton>Submit Answer</SubmitButton>
          </SubmitTab>
        </Page>

        <Timer>
          <TimerToggle aria-label="Toggle timer">
            <Svg s={6} vb="0 0 6 6">
              <path d="M0 1h6L3 4z" fill="#000" />
            </Svg>
          </TimerToggle>
          <TimerFill />
        </Timer>

        <Scrollbar>
          <Svg s={17} vb="0 0 17 17">
            <path d="M5 11h7L8.5 7z" fill="#505050" />
          </Svg>
          <ScrollTrack />
          <Svg s={17} vb="0 0 17 17">
            <path d="M5 6h7l-3.5 4z" fill="#505050" />
          </Svg>
        </Scrollbar>
      </Viewport>

      <Taskbar>
        <IconButton $w={48} aria-label="Start">
          <Svg s={16}>
            <path
              d="M0 2.2L7.3 1.1v6.4H0zM8.1 1L16 0v7.5H8.1zM0 8.3h7.3v6.5L0 13.8zM8.1 8.3H16V16l-7.9-1.1z"
              fill="#fff"
            />
          </Svg>
        </IconButton>
        <SearchBox>
          <Svg s={17} vb="0 0 17 17">
            <circle cx="10.5" cy="6" r="5" stroke="#e6e6e6" strokeWidth="1.3" />
            <path d="M7 9.7L1 16" stroke="#e6e6e6" strokeWidth="1.3" />
          </Svg>
          <SearchInput placeholder="Type here to search" aria-label="Search" />
        </SearchBox>
        {apps.map((a) => (
          <AppButton key={a.name} aria-label={a.name} $open={a.open} $active={a.active}>
            {a.icon}
          </AppButton>
        ))}
        <Tray>
          <Weather>
            <Svg s={20} vb="0 0 20 20">
              <path d="M4 14a4 4 0 010-7.5 6 6 0 0111-1A4.4 4.4 0 0116 14z" fill="#c4e3fb" />
              <path d="M4 7.5a6 6 0 018-3 6 6 0 013 2" stroke="#f3faff" strokeWidth="2" />
              <path d="M10 11c1.5 2 2 3 2 4a2 2 0 01-4 0c0-1 .5-2 2-4z" fill="#2f8de4" />
            </Svg>
            <span>30°C</span>
            <span>Light rain</span>
          </Weather>
          <TrayIcon>
            <Svg s={12} vb="0 0 12 12">
              <path d="M.5 8.5L6 3l5.5 5.5" stroke="#fff" strokeWidth="1.3" />
            </Svg>
          </TrayIcon>
          <TrayIcon>
            <Svg s={16}>
              <path d="M3 13a3 3 0 01-.5-6A5 5 0 0111 5a4 4 0 012.5 8z" fill="#0f78d4" />
              <path d="M3 13c-2-1-1-4 2-4 3-3 8-2 9 .5 2 .5 2 3.5 0 3.5z" fill="#2aa3ea" />
            </Svg>
          </TrayIcon>
          <TrayIcon>
            <Svg s={16}>
              <path d="M6 2.5h9.5v8H3.5V7M9.5 10.5V14M6 14.5h7" stroke="#fff" />
              <path d="M.5 1.5h4v3h-4zM2.5 5v3" stroke="#fff" />
            </Svg>
          </TrayIcon>
          <TrayIcon>
            <Svg s={17} vb="0 0 17 17">
              <path d="M.5 6H3l4-3.5v12L3 11H.5z" stroke="#fff" />
              <path
                d="M9 6.5c.8 1.2.8 2.8 0 4M11.3 4.5c1.9 2.5 1.9 5.5 0 8M13.6 2.5c3 3.7 3 8.3 0 12"
                stroke="#fff"
              />
            </Svg>
          </TrayIcon>
          <Clock>
            3:35 PM
            <br />
            10/7/2021
          </Clock>
          <Notices>
            <svg width="28" height="26" viewBox="0 0 28 26" fill="none" aria-label="Notifications">
              <path d="M0 1h17v13H6v4l-4-4H0z" fill="#fff" />
              <path d="M3 5h11M3 8h11M3 11h7" stroke="#252323" />
              <rect x="6.5" y="9.5" width="20" height="15" rx="7.5" fill="#3e3c3c" stroke="#8a8a8a" />
              <text x="16.5" y="21" textAnchor="middle" fill="#fff" fontFamily={ui} fontSize="11" fontWeight="600">
                22
              </text>
            </svg>
          </Notices>
        </Tray>
      </Taskbar>
    </Screen>
  );
}
